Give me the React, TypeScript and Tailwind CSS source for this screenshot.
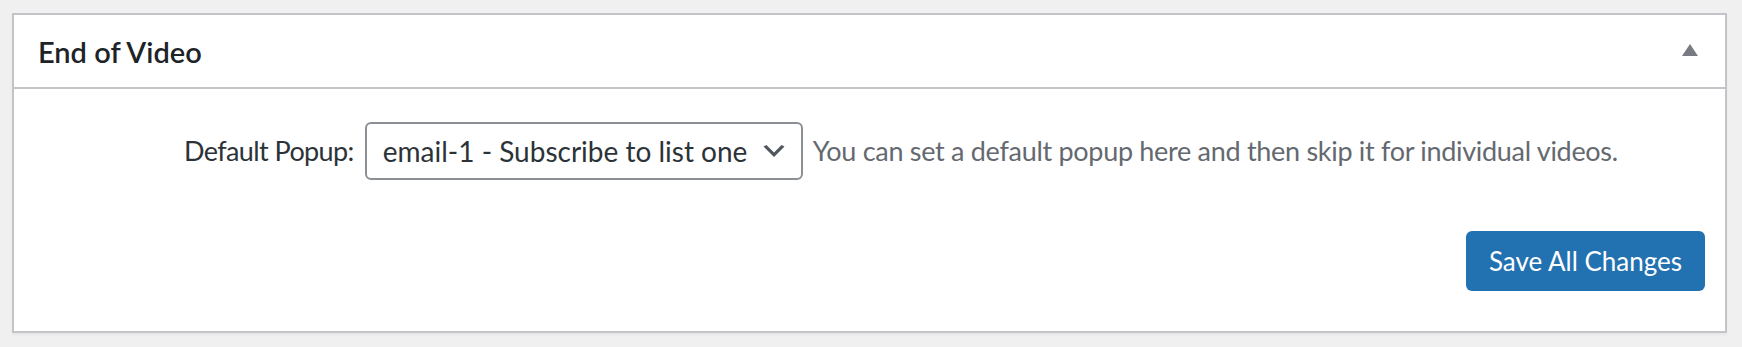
export default function App() {
  return (
    <div className="min-h-[347px] bg-[#f0f0f1] pt-[13px] pl-[12px] font-['Lato','Liberation_Sans',sans-serif]">
      <div className="w-[1715px] h-[320px] bg-white border-2 border-[#c3c4c7] shadow-[0_2px_2px_rgba(0,0,0,0.04)] flex flex-col">
        <div className="h-[74px] border-b-2 border-[#c3c4c7] flex items-center justify-between pl-[24px] pr-[27px]">
          <h2 className="text-[29px] font-semibold text-[#1d2327] leading-none">End of Video</h2>
          <svg width="16" height="12" viewBox="0 0 16 12" className="mt-[-2px]">
            <path d="M8 0 L16 12 L0 12 Z" fill="#787c82" />
          </svg>
        </div>
        <div className="flex-1 flex flex-col justify-between pt-[33px] pb-[40px] pr-[20px]">
          <div className="flex items-center pl-[170px]">
            <label className="text-[27px] tracking-[-0.6px] text-[#2c3338] mr-[11px]">Default Popup:</label>
            <div className="relative">
              <select
                defaultValue="email-1"
                className="appearance-none w-[438px] h-[58px] border-2 border-[#8c8f94] rounded-[6px] bg-white pl-[16px] pr-[48px] text-[28px] text-[#2c3338] outline-none font-['Lato','Liberation_Sans',sans-serif]"
              >
                <option value="email-1">email-1 - Subscribe to list one</option>
              </select>
              <svg
                width="30"
                height="30"
                viewBox="0 0 20 20"
                className="absolute right-[14px] top-1/2 -translate-y-1/2 pointer-events-none"
              >
                <path d="M5 6l5 5 5-5 2 1-7 7-7-7 2-1z" fill="#50575e" />
              </svg>
            </div>
            <p className="ml-[10px] text-[27px] tracking-[-0.3px] text-[#646970]">
              You can set a default popup here and then skip it for individual videos.
            </p>
          </div>
          <div className="flex justify-end">
            <button className="w-[239px] h-[60px] rounded-[6px] bg-[#2271b1] text-white text-[26px] text-center">
              Save All Changes
            </button>
          </div>
        </div>
      </div>
    </div>
  );
}
